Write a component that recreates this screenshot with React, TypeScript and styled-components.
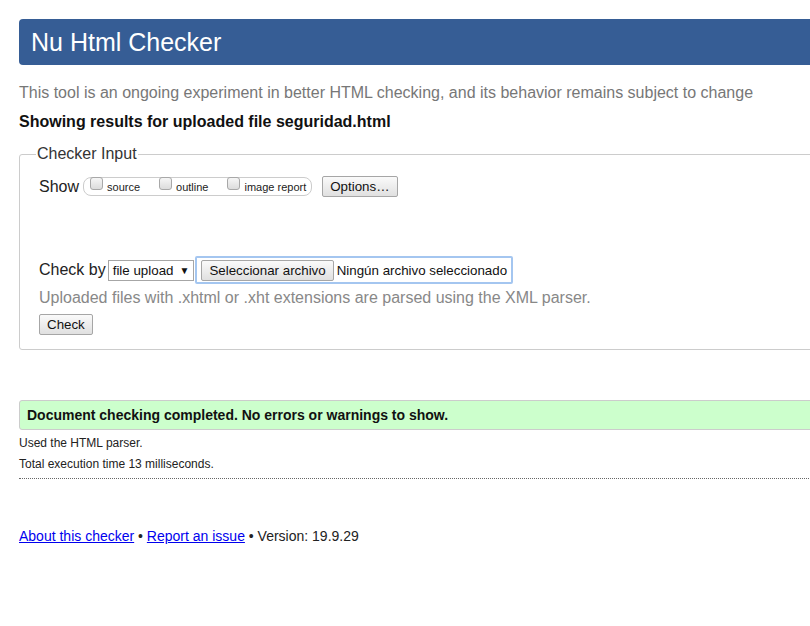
import React from "react";
import styled, { createGlobalStyle } from "styled-components";

const Global = createGlobalStyle`
  html, body { margin: 0; padding: 0; background: #fff; overflow: hidden; }
  body { font-family: "Liberation Sans", Arial, sans-serif; color: #111; }
`;

const Page = styled.div`
  width: 1100px;
  padding: 19px 19px 40px 19px;
  box-sizing: border-box;
`;

const Header = styled.h1`
  margin: 0;
  height: 46px;
  background: #365d95;
  border-radius: 4px;
  color: #fff;
  font-weight: normal;
  font-size: 25px;
  line-height: 46px;
  padding-left: 12px;
`;

const Lead = styled.p`
  margin: 18px 0 0 0;
  font-size: 16px;
  line-height: 20px;
  color: #777;
`;

const Results = styled.p`
  margin: 9px 0 0 0;
  font-size: 16px;
  font-weight: bold;
  line-height: 20px;
  color: #111;
`;

const Fieldset = styled.fieldset`
  margin: 13px 0 0 0;
  padding: 13px 19px 14px 19px;
  border: 1px solid #ccc;
  border-radius: 3px;
  min-height: 0;
`;

const Legend = styled.legend`
  font-size: 16px;
  padding: 0 1px;
  margin-left: -3px;
  color: #333;
`;

const Row = styled.div<{ $mt?: number }>`
  display: flex;
  align-items: center;
  margin-top: ${(p) => p.$mt ?? 0}px;
  font-size: 16px;
  color: #222;
`;

const Pill = styled.div`
  display: flex;
  align-items: center;
  margin-left: 4px;
  height: 17px;
  padding: 0 5px 0 6px;
  border: 1px solid #ccc;
  border-radius: 8px;
  gap: 19px;
`;

const CheckLabel = styled.label`
  display: flex;
  align-items: center;
  font-size: 11px;
  color: #222;
  gap: 4px;
`;

const Check = styled.span`
  display: inline-block;
  width: 11px;
  height: 11px;
  border: 1px solid #a8a8a8;
  border-radius: 3px;
  background: linear-gradient(#f6f6f6, #dcdcdc);
  position: relative;
  top: -3px;
`;

const Button = styled.button<{ $ml?: number }>`
  font-family: "Liberation Sans", Arial, sans-serif;
  font-size: 13.33px;
  color: #111;
  background: linear-gradient(#fafafa, #e0e0e0);
  border: 1px solid #a6a6a6;
  border-radius: 2px;
  padding: 0 7px;
  height: 21px;
  line-height: 19px;
  margin-left: ${(p) => p.$ml ?? 0}px;
  cursor: default;
`;

const Spacer = styled.div`
  height: 59px;
`;

const SelectBox = styled.div`
  display: flex;
  align-items: center;
  margin-left: 2px;
  height: 19px;
  padding: 0 4px;
  border: 1px solid #a6a6a6;
  background: #fff;
  font-size: 13.33px;
  color: #111;
  gap: 6px;
`;

const Arrow = styled.span`
  font-size: 10px;
`;

const FileBox = styled.div`
  display: flex;
  align-items: center;
  height: 24px;
  padding: 0 4px 0 4px;
  margin-left: 1px;
  border: 2px solid #a4c6f0;
  border-radius: 2px;
  font-size: 13.33px;
  color: #111;
  gap: 3px;
`;

const Hint = styled.p`
  margin: 4px 0 0 0;
  font-size: 16px;
  color: #888;
  line-height: 20px;
`;

const Success = styled.div`
  margin-top: 50px;
  height: 28px;
  line-height: 28px;
  background: #ccffcc;
  border: 1px solid #ccc;
  border-radius: 3px;
  padding-left: 7px;
  font-size: 14px;
  font-weight: bold;
  color: #111;
`;

const Small = styled.p<{ $mt: number }>`
  margin: ${(p) => p.$mt}px 0 0 0;
  font-size: 12px;
  line-height: 14px;
  color: #222;
`;

const Rule = styled.hr`
  margin: 7px 0 0 0;
  border: 0;
  border-top: 1px dotted #666;
  height: 0;
`;

const Footer = styled.p`
  margin: 49px 0 0 0;
  font-size: 14px;
  color: #222;
  a { color: #0000ee; text-decoration: underline; }
`;

export default function App() {
  return (
    <>
      <Global />
      <Page>
        <Header>Nu Html Checker</Header>
        <Lead>
          This tool is an ongoing experiment in better HTML checking, and its behavior remains subject to change
        </Lead>
        <Results>Showing results for uploaded file seguridad.html</Results>
        <Fieldset>
          <Legend>Checker Input</Legend>
          <Row>
            Show
            <Pill>
              <CheckLabel>
                <Check />
                source
              </CheckLabel>
              <CheckLabel>
                <Check />
                outline
              </CheckLabel>
              <CheckLabel>
                <Check />
                image report
              </CheckLabel>
            </Pill>
            <Button $ml={10}>Options…</Button>
          </Row>
          <Spacer />
          <Row>
            Check by
            <SelectBox>
              file upload <Arrow>▼</Arrow>
            </SelectBox>
            <FileBox>
              <Button>Seleccionar archivo</Button>
              Ningún archivo seleccionado
            </FileBox>
          </Row>
          <Hint>Uploaded files with .xhtml or .xht extensions are parsed using the XML parser.</Hint>
          <Row $mt={6}>
            <Button>Check</Button>
          </Row>
        </Fieldset>
        <Success>Document checking completed. No errors or warnings to show.</Success>
        <Small $mt={6}>Used the HTML parser.</Small>
        <Small $mt={7}>Total execution time 13 milliseconds.</Small>
        <Rule />
        <Footer>
          <a href="#">About this checker</a> • <a href="#">Report an issue</a> • Version: 19.9.29
        </Footer>
      </Page>
    </>
  );
}
